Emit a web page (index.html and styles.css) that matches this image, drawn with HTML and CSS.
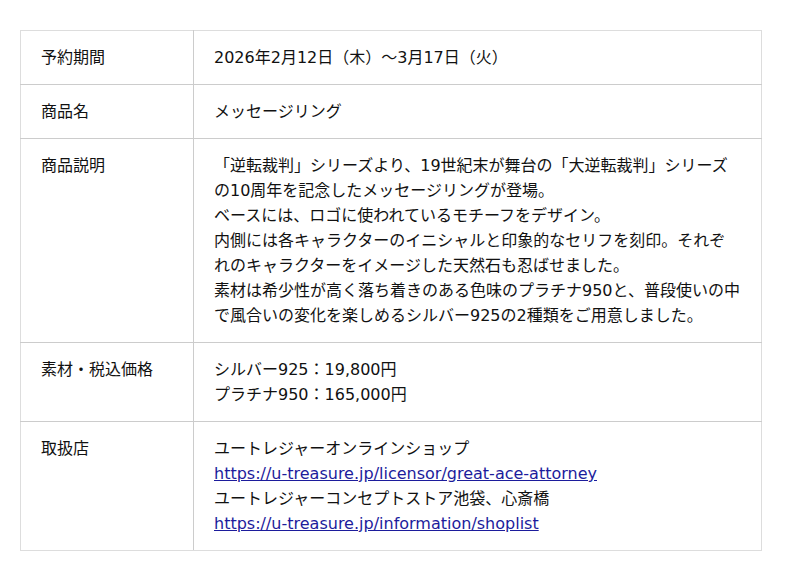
FILE: index.html
```html
<!DOCTYPE html>
<html lang="ja">
<head>
<meta charset="utf-8">
<link rel="stylesheet" href="styles.css">
</head>
<body>
<table class="spec">
  <tr>
    <th>予約期間</th>
    <td>2026年2月12日（木）〜3月17日（火）</td>
  </tr>
  <tr>
    <th>商品名</th>
    <td>メッセージリング</td>
  </tr>
  <tr>
    <th>商品説明</th>
    <td>「逆転裁判」シリーズより、19世紀末が舞台の「大逆転裁判」シリーズの10周年を記念したメッセージリングが登場。<br>ベースには、ロゴに使われているモチーフをデザイン。<br>内側には各キャラクターのイニシャルと印象的なセリフを刻印。それぞれのキャラクターをイメージした天然石も忍ばせました。<br>素材は希少性が高く落ち着きのある色味のプラチナ950と、普段使いの中で風合いの変化を楽しめるシルバー925の2種類をご用意しました。</td>
  </tr>
  <tr>
    <th>素材・税込価格</th>
    <td>シルバー925：19,800円<br>プラチナ950：165,000円</td>
  </tr>
  <tr>
    <th>取扱店</th>
    <td>ユートレジャーオンラインショップ<br><a href="#">https://u-treasure.jp/licensor/great-ace-attorney</a><br>ユートレジャーコンセプトストア池袋、心斎橋<br><a href="#">https://u-treasure.jp/information/shoplist</a></td>
  </tr>
</table>
</body>
</html>
```

FILE: styles.css
```css
html, body {
  margin: 0;
  padding: 0;
  background: #fff;
}
body {
  padding: 30px 20px;
  font-family: "DejaVu Sans", "Noto Sans CJK JP", sans-serif;
  font-size: 16px;
  line-height: 25px;
  color: #111;
}
.spec {
  width: 742px;
  border-collapse: collapse;
  table-layout: fixed;
}
.spec th, .spec td {
  border: 1px solid #ccc;
  border-left-color: #ddd;
  border-right-color: #ddd;
  padding: 14px 20px;
  vertical-align: top;
  text-align: left;
  font-weight: normal;
}
.spec tr:first-child th, .spec tr:first-child td {
  border-top-color: #ddd;
}
.spec tr:last-child th, .spec tr:last-child td {
  border-bottom-color: #ddd;
}
.spec th {
  width: 132px;
  border-right-color: #ccc;
}
.spec a {
  color: #1c1c9c;
  text-decoration: underline;
}
```
